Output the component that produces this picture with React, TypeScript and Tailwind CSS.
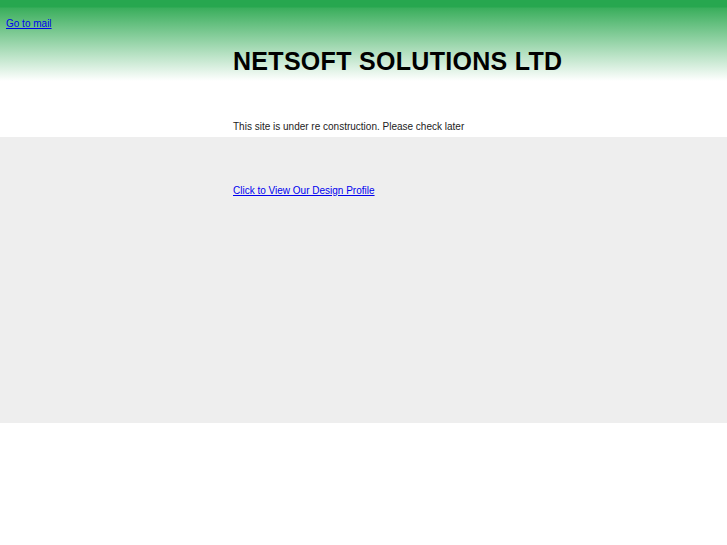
export default function App() {
  return (
    <div className="w-[727px] h-[545px] bg-white font-['Liberation_Sans',Arial,sans-serif] text-black">
      <div className="relative h-[81px] bg-[linear-gradient(to_bottom,#27a74f_0px,#27a74f_7px,#3aae5c_8px,#ffffff_81px)]">
        <a href="#" className="absolute left-[6px] top-[17px] text-[10px] leading-[13px] text-[#0000ee] underline">Go to mail</a>
        <h1 className="absolute left-[233px] top-[46px] text-[25px] leading-[30px] font-bold tracking-[0.3px]">NETSOFT SOLUTIONS LTD</h1>
      </div>
      <div className="h-[56px] pl-[233px] pt-[39px]">
        <p className="text-[10px] leading-[13px] text-[#222]">This site is under re construction. Please check later</p>
      </div>
      <div className="h-[286px] bg-[#eeeeee] pl-[233px] pt-[40px]">
        <a href="#" className="text-[10px] leading-[13px] text-[#0000ee] underline">Click to View Our Design Profile</a>
      </div>
    </div>
  );
}
